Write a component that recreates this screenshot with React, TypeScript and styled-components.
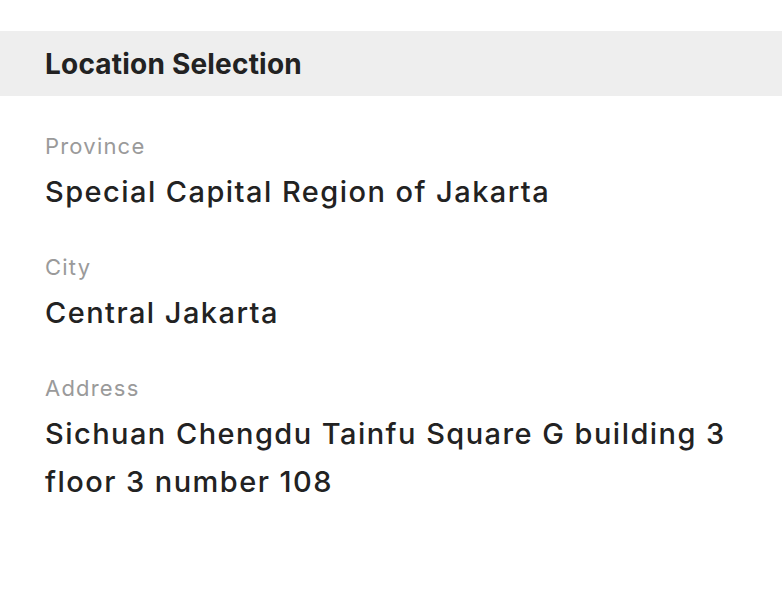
import React from "react";
import styled, { createGlobalStyle } from "styled-components";

const GlobalStyle = createGlobalStyle`
  body {
    margin: 0;
    background: #ffffff;
    font-family: Inter, "Noto Sans", sans-serif;
    color: #222222;
  }
`;

const Page = styled.div`
  width: 782px;
  height: 596px;
  padding-top: 31px;
  box-sizing: border-box;
  background: #ffffff;
`;

const SectionHeader = styled.div`
  height: 65px;
  display: flex;
  align-items: center;
  padding: 0 45px;
  background: #eeeeee;

  h2 {
    margin: 0;
    font-size: 28px;
    font-weight: 700;
    letter-spacing: 0.2px;
    color: #222222;
  }
`;

const FieldList = styled.div`
  display: flex;
  flex-direction: column;
  padding: 37px 45px 0;
  gap: 38px;
`;

const Field = styled.div`
  display: flex;
  flex-direction: column;
  gap: 9px;
`;

const Label = styled.div`
  font-size: 22px;
  line-height: 26px;
  letter-spacing: 1.2px;
  color: #9a9a9a;
`;

const Value = styled.div`
  font-size: 29px;
  line-height: 48px;
  letter-spacing: 1.45px;
  font-weight: 500;
  color: #222222;
  max-width: 700px;
`;

const fields = [
  { label: "Province", value: "Special Capital Region of Jakarta" },
  { label: "City", value: "Central Jakarta" },
  { label: "Address", value: "Sichuan Chengdu Tainfu Square G building 3 floor 3 number 108" },
];

const App: React.FC = () => {
  return (
    <Page>
      <GlobalStyle />
      <SectionHeader>
        <h2>Location Selection</h2>
      </SectionHeader>
      <FieldList>
        {fields.map((field) => (
          <Field key={field.label}>
            <Label>{field.label}</Label>
            <Value>{field.value}</Value>
          </Field>
        ))}
      </FieldList>
    </Page>
  );
};

export default App;
